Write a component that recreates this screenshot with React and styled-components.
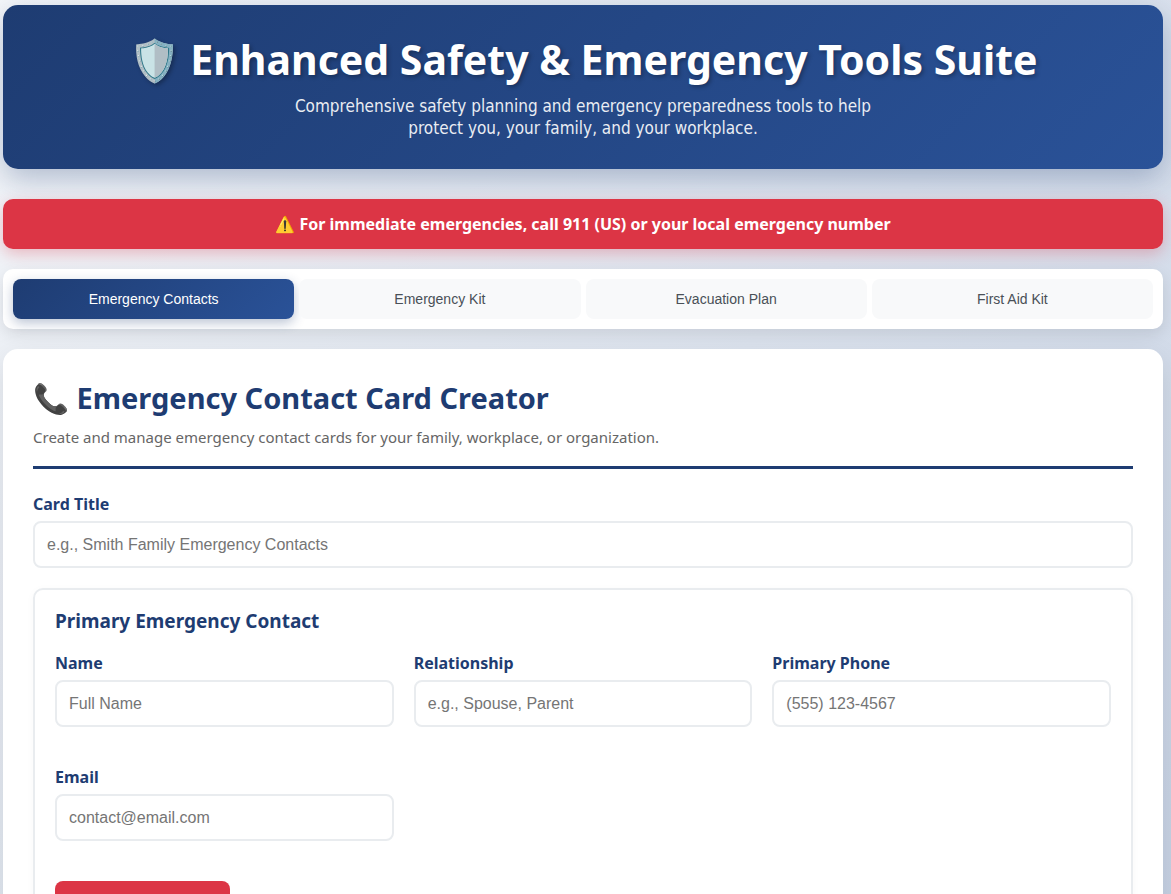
import React from 'react';
import styled, { createGlobalStyle } from 'styled-components';

const boldFont = '"Noto Sans", "Open Sans", sans-serif';
const controlFont = '"Liberation Sans", Arial, sans-serif';

const GlobalStyle = createGlobalStyle`
* {
    box-sizing: border-box;
}

body {
    margin: 0;
    background: linear-gradient(135deg, #f5f7fa 0%, #c3cfe2 100%);
    font-family: "DejaVu Sans Condensed", "DejaVu Sans", sans-serif;
    font-size: 16px;
    color: #333;
}
`;

const Page = styled.div`
max-width: 1200px;
margin: 0 auto;
padding: 5px 8px 30px 3px;
`;

const Header = styled.header`
padding: 30px;
margin-bottom: 30px;
border-radius: 15px;
background: linear-gradient(135deg, #1e3c72 0%, #2a5298 100%);
box-shadow: 0 10px 30px rgba(30, 60, 114, 0.3);
color: #fff;
text-align: center;
`;

const Title = styled.h1`
margin: 0 0 12px;
font-family: ${boldFont};
font-size: 41px;
line-height: 48px;
text-shadow: 2px 2px 4px rgba(0, 0, 0, 0.3);
`;

const Subtitle = styled.p`
max-width: 600px;
margin: 0 auto;
font-size: 17px;
line-height: 22px;
opacity: 0.9;
`;

const Alert = styled.div`
padding: 15px;
margin-bottom: 20px;
border-radius: 10px;
background: #dc3545;
box-shadow: 0 5px 15px rgba(220, 53, 69, 0.3);
color: #fff;
font-family: ${boldFont};
font-weight: bold;
line-height: 20px;
text-align: center;
`;

const Tabs = styled.nav`
display: grid;
grid-template-columns: repeat(4, 1fr);
gap: 5px;
padding: 10px;
margin-bottom: 20px;
border-radius: 10px;
background: #fff;
box-shadow: 0 5px 15px rgba(0, 0, 0, 0.1);
`;

const Tab = styled.button`
height: 40px;
border: none;
border-radius: 8px;
background: ${p => p.$active ? 'linear-gradient(135deg, #1e3c72 0%, #2a5298 100%)' : '#f8f9fa'};
box-shadow: ${p => p.$active ? '0 4px 12px rgba(30, 60, 114, 0.3)' : 'none'};
color: ${p => p.$active ? '#fff' : '#495057'};
font-family: ${controlFont};
font-size: 14px;
cursor: pointer;
`;

const Panel = styled.main`
padding: 30px;
border-radius: 15px;
background: #fff;
box-shadow: 0 10px 30px rgba(0, 0, 0, 0.1);
`;

const PanelHeader = styled.div`
padding-bottom: 17px;
margin-bottom: 25px;
border-bottom: 3px solid #1e3c72;
`;

const PanelTitle = styled.h2`
margin: 0 0 8px;
color: #1e3c72;
font-family: ${boldFont};
font-size: 29px;
line-height: 38px;
`;

const PanelText = styled.p`
margin: 0;
color: #666;
font-family: "Noto Sans", "Open Sans", sans-serif;
font-size: 15px;
line-height: 24px;
`;

const Group = styled.div`
margin-bottom: 20px;
`;

const Label = styled.label`
display: block;
margin-bottom: 7px;
color: #1e3c72;
font-family: ${boldFont};
font-weight: bold;
line-height: 20px;
`;

const Input = styled.input`
display: block;
width: 100%;
height: 47px;
padding: 12px;
border: 2px solid #e9ecef;
border-radius: 8px;
background: #fff;
font-family: ${controlFont};
font-size: 16px;

&:focus {
    outline: none;
    border-color: #2a5298;
}
`;

const ContactCard = styled.section`
padding: 20px;
border: 2px solid #e9ecef;
border-radius: 10px;
box-shadow: 0 2px 10px rgba(0, 0, 0, 0.03);
`;

const CardTitle = styled.h3`
margin: 0 0 20px;
color: #1e3c72;
font-family: ${boldFont};
font-size: 19px;
line-height: 23px;
`;

const Fields = styled.div`
display: grid;
grid-template-columns: repeat(auto-fit, minmax(300px, 1fr));
gap: 20px;
margin-bottom: 20px;
`;

const RemoveButton = styled.button`
min-width: 175px;
padding: 18px 25px;
border: none;
border-radius: 8px;
background: #dc3545;
color: #fff;
font-family: ${controlFont};
font-size: 16px;
cursor: pointer;
`;

const tabs = ['Emergency Contacts', 'Emergency Kit', 'Evacuation Plan', 'First Aid Kit'];

const fields = [
    { id: 'name', label: 'Name', type: 'text', placeholder: 'Full Name' },
    { id: 'relationship', label: 'Relationship', type: 'text', placeholder: 'e.g., Spouse, Parent' },
    { id: 'phone', label: 'Primary Phone', type: 'tel', placeholder: '(555) 123-4567' },
    { id: 'email', label: 'Email', type: 'email', placeholder: 'contact@email.com' },
];

const Field = ({ id, label, type, placeholder }) => (
    <Group>
        <Label htmlFor={id}>{label}</Label>
        <Input id={id} type={type} placeholder={placeholder} />
    </Group>
);

export const App = () => {
    const [activeTab, setActiveTab] = React.useState(tabs[0]);

    return (
        <>
            <GlobalStyle />
            <Page>
                <Header>
                    <Title>🛡️ Enhanced Safety &amp; Emergency Tools Suite</Title>
                    <Subtitle>
                        Comprehensive safety planning and emergency preparedness tools to help protect you, your family, and your workplace.
                    </Subtitle>
                </Header>

                <Alert role="alert">⚠️ For immediate emergencies, call 911 (US) or your local emergency number</Alert>

                <Tabs>
                    {tabs.map(tab => (
                        <Tab key={tab} type="button" $active={tab === activeTab} onClick={() => setActiveTab(tab)}>{tab}</Tab>
                    ))}
                </Tabs>

                <Panel>
                    <PanelHeader>
                        <PanelTitle>📞 Emergency Contact Card Creator</PanelTitle>
                        <PanelText>Create and manage emergency contact cards for your family, workplace, or organization.</PanelText>
                    </PanelHeader>

                    <Field id="card-title" label="Card Title" type="text" placeholder="e.g., Smith Family Emergency Contacts" />

                    <ContactCard>
                        <CardTitle>Primary Emergency Contact</CardTitle>
                        <Fields>
                            {fields.map(field => <Field key={field.id} {...field} />)}
                        </Fields>
                        <RemoveButton type="button">Remove Contact</RemoveButton>
                    </ContactCard>
                </Panel>
            </Page>
        </>
    );
};

export default App;
